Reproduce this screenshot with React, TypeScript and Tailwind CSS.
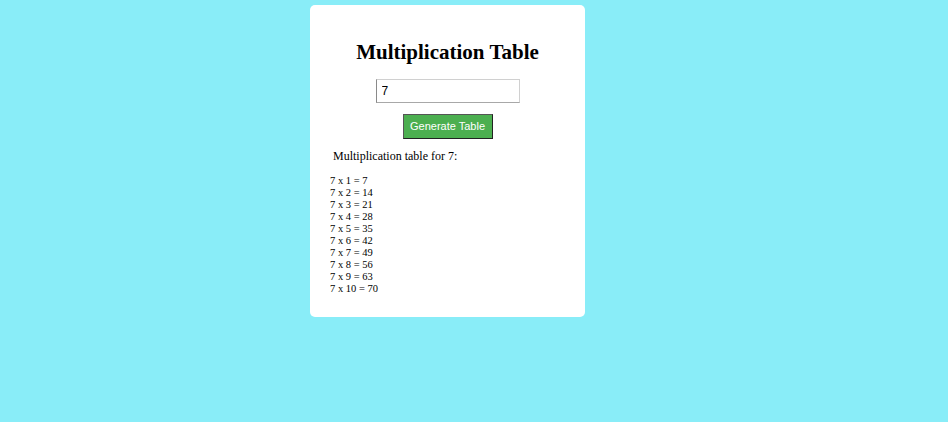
import { useState } from "react";

const App = () => {
  const [value, setValue] = useState("7");
  const n = 7;
  const rows = Array.from({ length: 10 }, (_, i) => i + 1);

  return (
    <div className="min-h-[422px] w-full bg-[#89edf8] pl-[310px] pt-[5px]">
      <div className="w-[275px] rounded-[5px] bg-white pt-[35px] pb-[22px] font-['Liberation_Serif',serif] text-black">
        <h1 className="text-center text-[21px] font-bold leading-[24px]">Multiplication Table</h1>

        <div className="mt-[15px] flex justify-center">
          <input
            value={value}
            onChange={(e) => setValue(e.target.value)}
            className="h-[24px] w-[144px] border border-t-[#d0d0d0] border-r-[#d0d0d0] border-b-[#a8a8a8] border-l-[#8a8a8a] bg-white pl-[5px] font-['Liberation_Sans',sans-serif] text-[12px] text-black outline-none"
          />
        </div>

        <div className="mt-[11px] flex justify-center">
          <button className="h-[25px] w-[90px] border border-t-[#555] border-l-[#555] border-r-[#222] border-b-[#222] bg-[#4caf50] font-['Liberation_Sans',sans-serif] text-[11px] text-white">
            Generate Table
          </button>
        </div>

        <p className="mt-[11px] pl-[23px] text-[12px] leading-[12px]">Multiplication table for {n}:</p>

        <div className="mt-[13px] pl-[20px] text-[10.5px] leading-[12px]">
          {rows.map((i) => (
            <div key={i}>
              {n} x {i} = {n * i}
            </div>
          ))}
        </div>
      </div>
    </div>
  );
};

export default App;
